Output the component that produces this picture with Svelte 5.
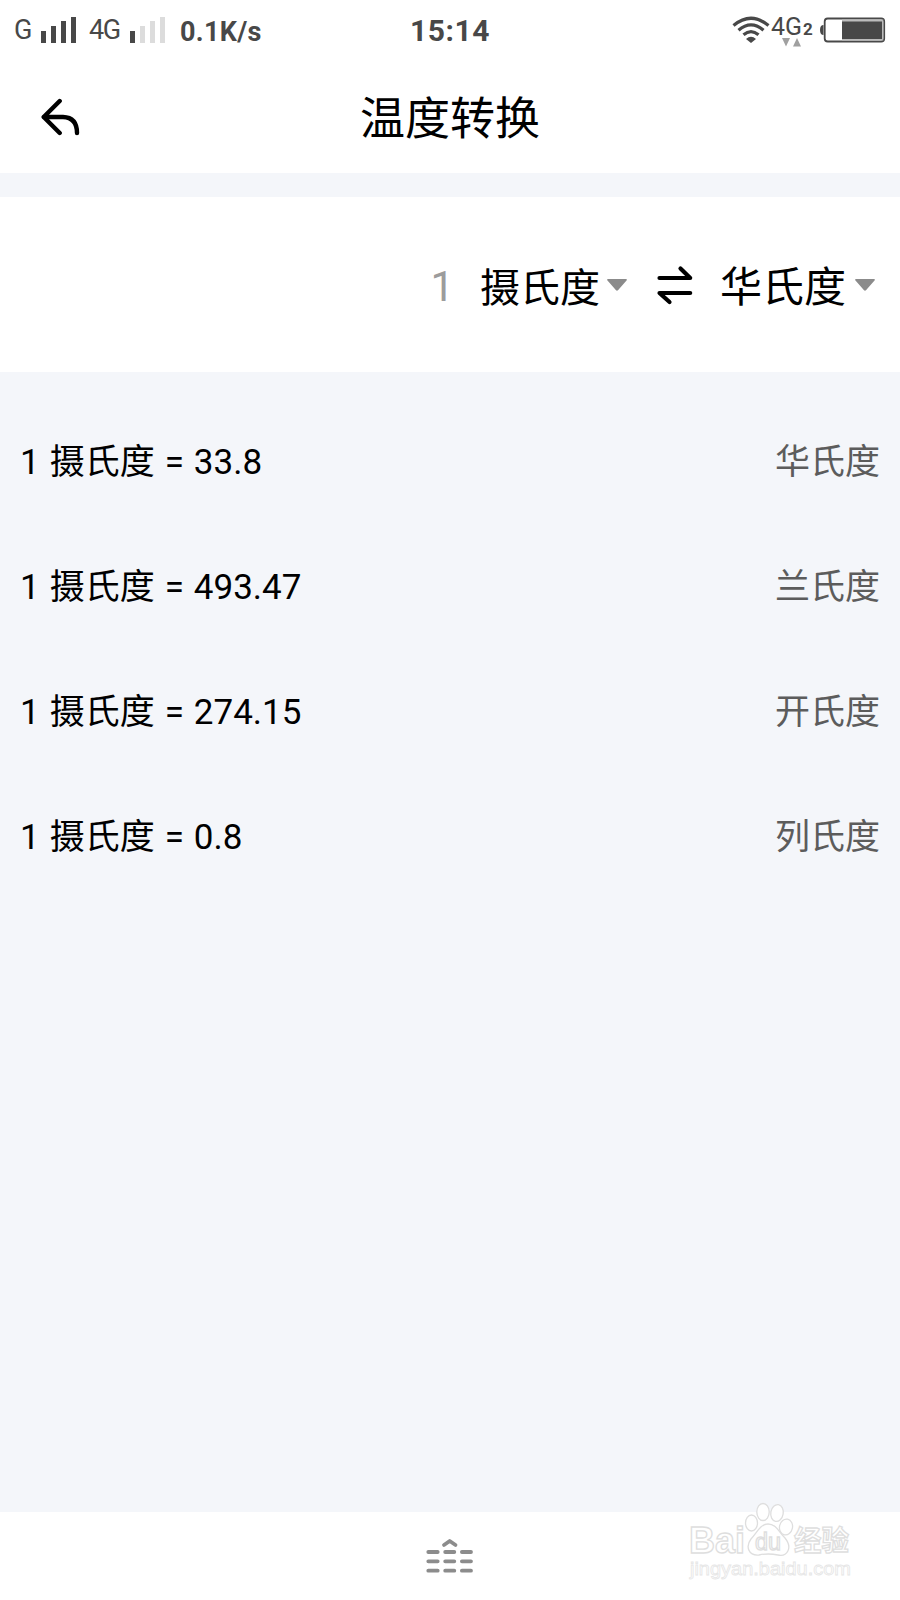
<script lang="ts">
  type Result = { value: string; unit: string };

  let amount = $state(1);
  let fromUnit = $state("摄氏度");
  let toUnit = $state("华氏度");

  const results: Result[] = [
    { value: "33.8", unit: "华氏度" },
    { value: "493.47", unit: "兰氏度" },
    { value: "274.15", unit: "开氏度" },
    { value: "0.8", unit: "列氏度" },
  ];

  const bars = [12, 17, 22, 26];
  const keyRows = [17, 26.3, 35.7];
</script>

{#snippet signal(level: number)}
  <svg class="signal" width="35" height="26" viewBox="0 0 35 26">
    {#each bars as h, i}
      <rect x={i * 10} y={26 - h} width="5" height={h} fill={i < level ? "#484848" : "#dcdcdc"} />
    {/each}
  </svg>
{/snippet}

{#snippet caret()}
  <svg class="caret" width="20" height="12" viewBox="0 0 20 12">
    <path d="M1 0H19Q20.5 .3 19.5 1.6L11.2 11Q10 12.4 8.8 11L.5 1.6Q-.5 .3 1 0Z" fill="#8b8b8b" />
  </svg>
{/snippet}

<div class="screen">
  <div class="status">
    <div class="status-left">
      <span class="net">G</span>
      {@render signal(4)}
      <span class="net second">4G</span>
      {@render signal(1)}
      <span class="speed">0.1K/s</span>
    </div>
    <span class="clock">15:14</span>
    <div class="status-right">
      <svg width="168" height="60" viewBox="732 0 168 60">
        <g fill="none" stroke="#484848" stroke-width="3.2">
          <path d="M733.5 25.5Q751 11 768.5 25.5" />
          <path d="M738.5 30.2Q751 19.5 763.5 30.2" />
          <path d="M743.5 34.8Q751 28.5 758.5 34.8" />
        </g>
        <path d="M746 39Q751 34.5 756 39L751 43Z" fill="#484848" />
        <text x="771" y="34.5" font-size="26.5" textLength="31" lengthAdjust="spacingAndGlyphs">4G</text>
        <text x="803" y="34.5" font-size="17" font-weight="700">2</text>
        <path d="M782 38H790L786 46.5ZM793 46.5H801L797 38Z" fill="#a0a0a0" />
        <path d="M823.5 25Q820 25 820 30T823.5 35Z" fill="#484848" />
        <rect x="824.7" y="18.5" width="59.5" height="23" rx="3" fill="#fff" stroke="#484848" stroke-width="1.8" />
        <path d="M842 19.4H883.3V40.6H842Z" fill="#bcbcbc" />
        <rect x="842" y="21.5" width="40" height="17.5" fill="#484848" />
      </svg>
    </div>
  </div>

  <header>
    <button class="back" aria-label="返回">
      <svg width="40" height="38" viewBox="0 0 40 38" fill="none" stroke="#000" stroke-width="4.4" stroke-linecap="round" stroke-linejoin="round">
        <path d="M19.7 3L3.7 19L19.7 35M3.7 19H23Q37 19.5 37 35" />
      </svg>
    </button>
    <h1>温度转换</h1>
  </header>

  <section class="converter">
    <span class="amount">{amount}</span>
    <span class="unit from">{fromUnit}</span>
    {@render caret()}
    <svg class="swap" width="36" height="40" viewBox="0 0 36 40" fill="none" stroke="#000" stroke-width="4.2" stroke-linecap="round" stroke-linejoin="round">
      <path d="M2.5 13H33.2L23.5 3.500M33.2 28H2.5L12.5 37" />
    </svg>
    <span class="unit to">{toUnit}</span>
    {@render caret()}
  </section>

  <main>
    {#each results as r}
      <div class="row">
        <span class="formula">{amount} {fromUnit} = {r.value}</span>
        <span class="name">{r.unit}</span>
      </div>
    {/each}
  </main>

  <footer>
    <svg width="48" height="40" viewBox="0 0 48 40" fill="none" stroke="#8c8c8c" stroke-width="3.8" stroke-linecap="round" stroke-linejoin="round">
      <path d="M18 10L23.700 6L29.500 10" />
      {#each keyRows as y}
        <path d="M2.300 {y}H11.7M19.2 {y}H28.3M35.9 {y}H45" />
      {/each}
    </svg>
  </footer>

  <svg class="watermark" width="180" height="90" viewBox="680 1500 180 90">
    <g fill="#fff" stroke="#dedede" stroke-width="1.3">
      <text x="689" y="1553" font-size="36" font-weight="700" textLength="56" lengthAdjust="spacingAndGlyphs">Bai</text>
      <ellipse cx="751.5" cy="1523" rx="6" ry="8" />
      <ellipse cx="763" cy="1512" rx="6.2" ry="8.500" />
      <ellipse cx="777" cy="1513" rx="6.2" ry="8.500" transform="rotate(10 777 1513)" />
      <ellipse cx="786" cy="1527" rx="6.5" ry="8" transform="rotate(12 786 1527)" />
      <path d="M768 1524C776 1524 779 1532 785 1538C793 1548 787 1557 778 1555Q768 1553 759 1555C749 1556 745 1547 751 1539C757 1533 760 1524 768 1524Z" />
      <text x="755" y="1550" font-size="23" textLength="26" lengthAdjust="spacingAndGlyphs">du</text>
      <text class="cjk" x="794" y="1551" font-size="28" font-weight="700" textLength="55" lengthAdjust="spacingAndGlyphs">经验</text>
    </g>
    <text class="site" x="690" y="1575" font-size="19" textLength="161" lengthAdjust="spacingAndGlyphs">jingyan.baidu.com</text>
  </svg>
</div>

<style>
  :global(body) {
    margin: 0;
  }

  .screen {
    position: relative;
    display: flex;
    flex-direction: column;
    width: 900px;
    height: 1600px;
    background: #f4f6fa;
    color: #000;
    font-family: Roboto, "Noto Sans CJK SC", sans-serif;
  }

  .status {
    display: grid;
    grid-template-columns: 1fr auto 1fr;
    align-items: center;
    height: 60px;
    background: #fff;
    color: #484848;
  }

  .status-left {
    display: flex;
    align-items: center;
    padding-left: 14px;
    line-height: 32px;
  }

  .net {
    width: 27px;
    font-size: 27px;
    letter-spacing: -1.5px;
  }

  .net.second {
    width: 41px;
    margin-left: 13px;
  }

  .signal {
    flex: none;
  }

  .speed {
    margin-left: 15px;
    padding-top: 3px;
    font-size: 27px;
    font-weight: 700;
    letter-spacing: 0.3px;
  }

  .clock {
    padding-top: 1px;
    font-size: 30px;
    font-weight: 700;
    letter-spacing: 0.5px;
  }

  .status-right {
    display: flex;
    justify-content: flex-end;
  }

  .status-right text {
    fill: #484848;
  }

  header {
    display: grid;
    grid-template-columns: 1fr auto 1fr;
    align-items: center;
    height: 113px;
    background: #fff;
  }

  .back {
    display: flex;
    width: 40px;
    margin: 0 0 0 40px;
    padding: 0;
    border: 0;
    background: none;
  }

  h1 {
    margin: 0;
    padding-top: 6px;
    font-size: 45px;
    font-weight: 400;
    line-height: 60px;
  }

  .converter {
    display: flex;
    align-items: center;
    justify-content: flex-end;
    height: 175px;
    margin-top: 24px;
    padding-right: 25px;
    background: #fff;
  }

  .amount {
    margin-right: 26px;
    padding-top: 3px;
    color: #9c9c9c;
    font-size: 42px;
  }

  .unit {
    white-space: nowrap;
  }

  .from {
    font-size: 40px;
  }

  .to {
    padding-bottom: 3px;
    font-size: 42px;
  }

  .caret {
    margin-left: 7px;
  }

  .to + .caret {
    margin-left: 9px;
  }

  .swap {
    margin: 0 27px 0 30px;
  }

  main {
    flex: 1;
    padding: 24px 20px 0;
  }

  .row {
    display: flex;
    align-items: center;
    justify-content: space-between;
    height: 125px;
    font-size: 35px;
  }

  .formula {
    word-spacing: 1.3px;
  }

  .name {
    color: #5c5c5c;
  }

  footer {
    display: flex;
    justify-content: center;
    height: 88px;
    padding-top: 23px;
    box-sizing: border-box;
    background: #fff;
  }

  .watermark {
    position: absolute;
    right: 40px;
    bottom: 10px;
    font-family: "Liberation Sans", sans-serif;
  }

  .cjk {
    font-family: "Noto Sans CJK SC", sans-serif;
  }

  .site {
    fill: #fff;
    stroke: #e6e6e6;
    stroke-width: 0.8;
  }
</style>
